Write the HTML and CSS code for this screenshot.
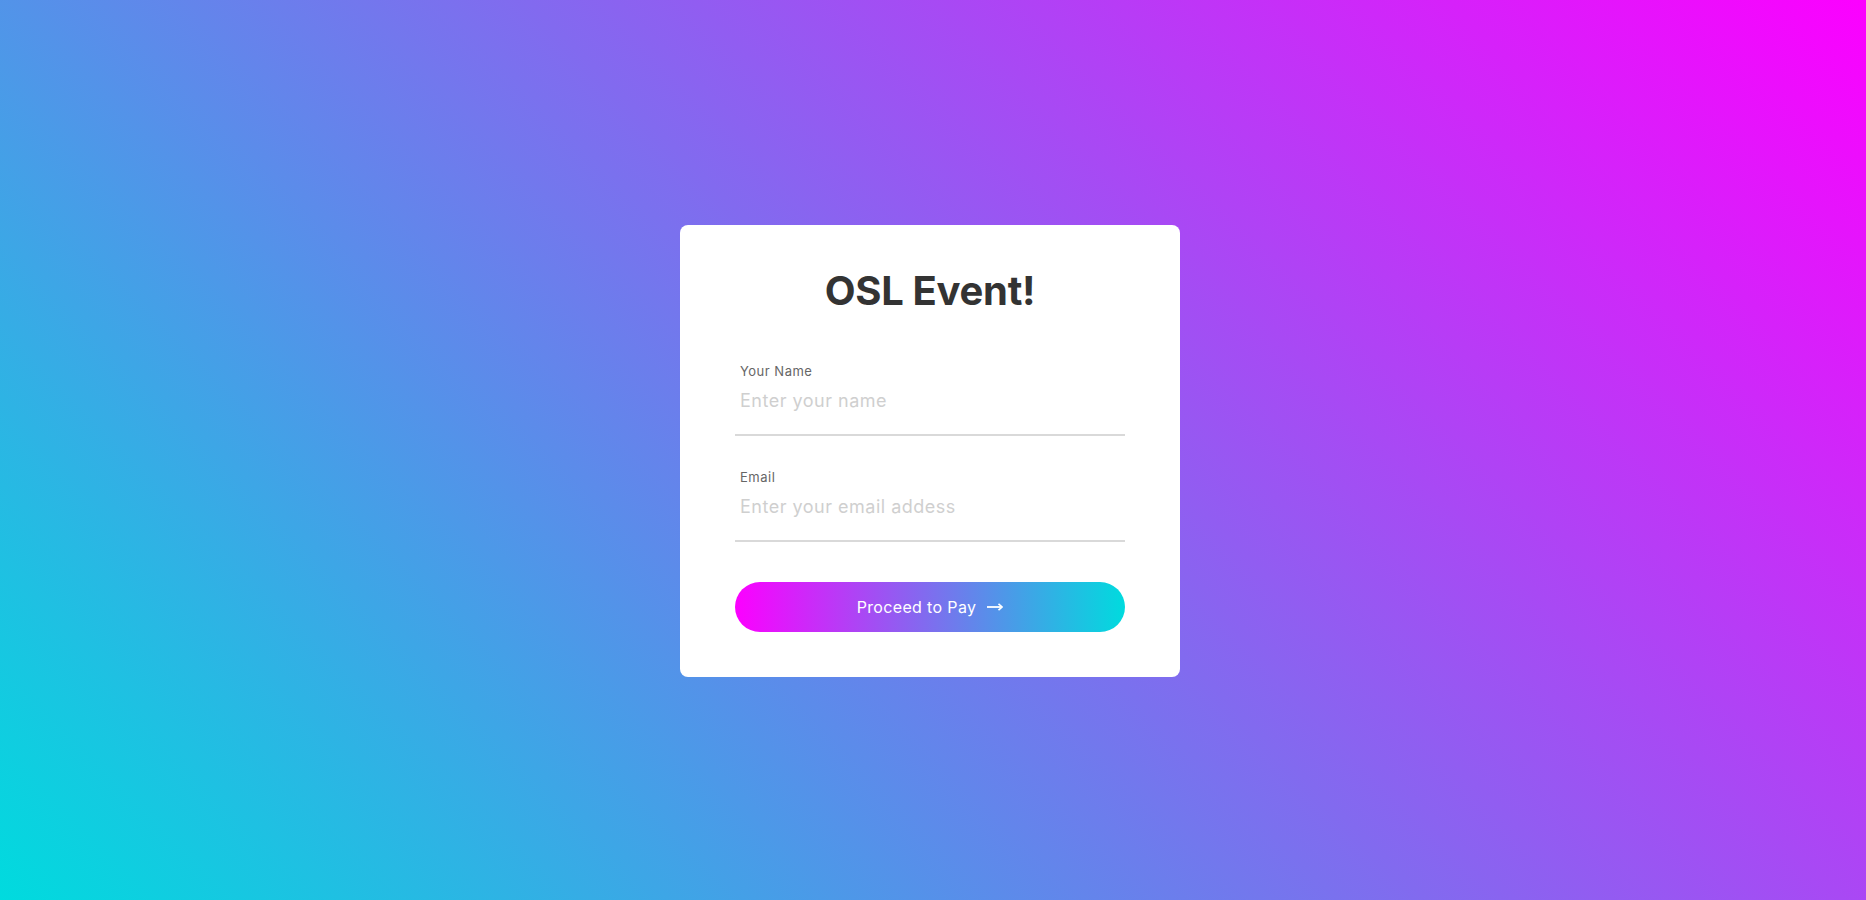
FILE: index.html
```html
<!DOCTYPE html>
<html lang="en">
<head>
<meta charset="utf-8">
<title>OSL Event!</title>
<link rel="stylesheet" href="styles.css">
</head>
<body>
<main class="page">
  <form class="card">
    <h1 class="title">OSL Event!</h1>
    <div class="field">
      <label class="label" for="name">Your Name</label>
      <input class="input" id="name" type="text" placeholder="Enter your name">
    </div>
    <div class="field">
      <label class="label" for="email">Email</label>
      <input class="input" id="email" type="email" placeholder="Enter your email addess">
    </div>
    <button class="pay" type="button">
      <span>Proceed to Pay</span>
      <svg class="arrow" width="16" height="8" viewBox="0 0 16 8" aria-hidden="true">
        <path d="M0 4H14.5" stroke="#fff" stroke-width="1.8" fill="none"/>
        <path d="M11.5 0.8L15.2 4L11.5 7.2" stroke="#fff" stroke-width="1.6" fill="none" stroke-linejoin="miter"/>
      </svg>
    </button>
  </form>
</main>
</body>
</html>
```
FILE: styles.css
```css
* { box-sizing: border-box; }
html, body { margin: 0; padding: 0; }
body {
  font-family: "Inter", "Open Sans", "DejaVu Sans", sans-serif;
  background: linear-gradient(45deg, #00dbde, #fc00ff);
  height: 100vh;
  overflow: hidden;
}
.page {
  height: 100vh;
  display: flex;
  align-items: center;
  justify-content: center;
  padding: 2px 6px 0 0;
}
.card {
  width: 500px;
  background: #fff;
  border-radius: 8px;
  padding: 42px 55px 45px;
  display: flex;
  flex-direction: column;
}
.title {
  margin: 0 0 48px;
  font-size: 40px;
  line-height: 48px;
  font-weight: 700;
  color: #333;
  text-align: center;
  letter-spacing: -0.3px;
}
.field {
  display: flex;
  flex-direction: column;
  gap: 10px;
  border-bottom: 2px solid #d9d9d9;
  padding-bottom: 21px;
  margin-bottom: 33px;
}
.field + .field { margin-bottom: 40px; }
.label {
  padding-left: 5px;
  font-size: 13px;
  line-height: 16px;
  color: #666;
  letter-spacing: 0.5px;
}
.input {
  border: 0;
  outline: none;
  padding: 0 5px;
  margin: 0;
  font-family: inherit;
  font-size: 18px;
  line-height: 24px;
  height: 24px;
  color: #333;
  background: transparent;
  letter-spacing: 0.5px;
}
.input::placeholder { color: #cfcfcf; }
.pay {
  height: 50px;
  border: 0;
  border-radius: 25px;
  background: linear-gradient(to right, #fc00ff, #00dbde);
  color: #fff;
  font-family: inherit;
  font-size: 16px;
  letter-spacing: 0.35px;
  display: flex;
  align-items: center;
  justify-content: center;
  gap: 11px;
  padding: 0;
  cursor: pointer;
}
.arrow { display: block; }
```
